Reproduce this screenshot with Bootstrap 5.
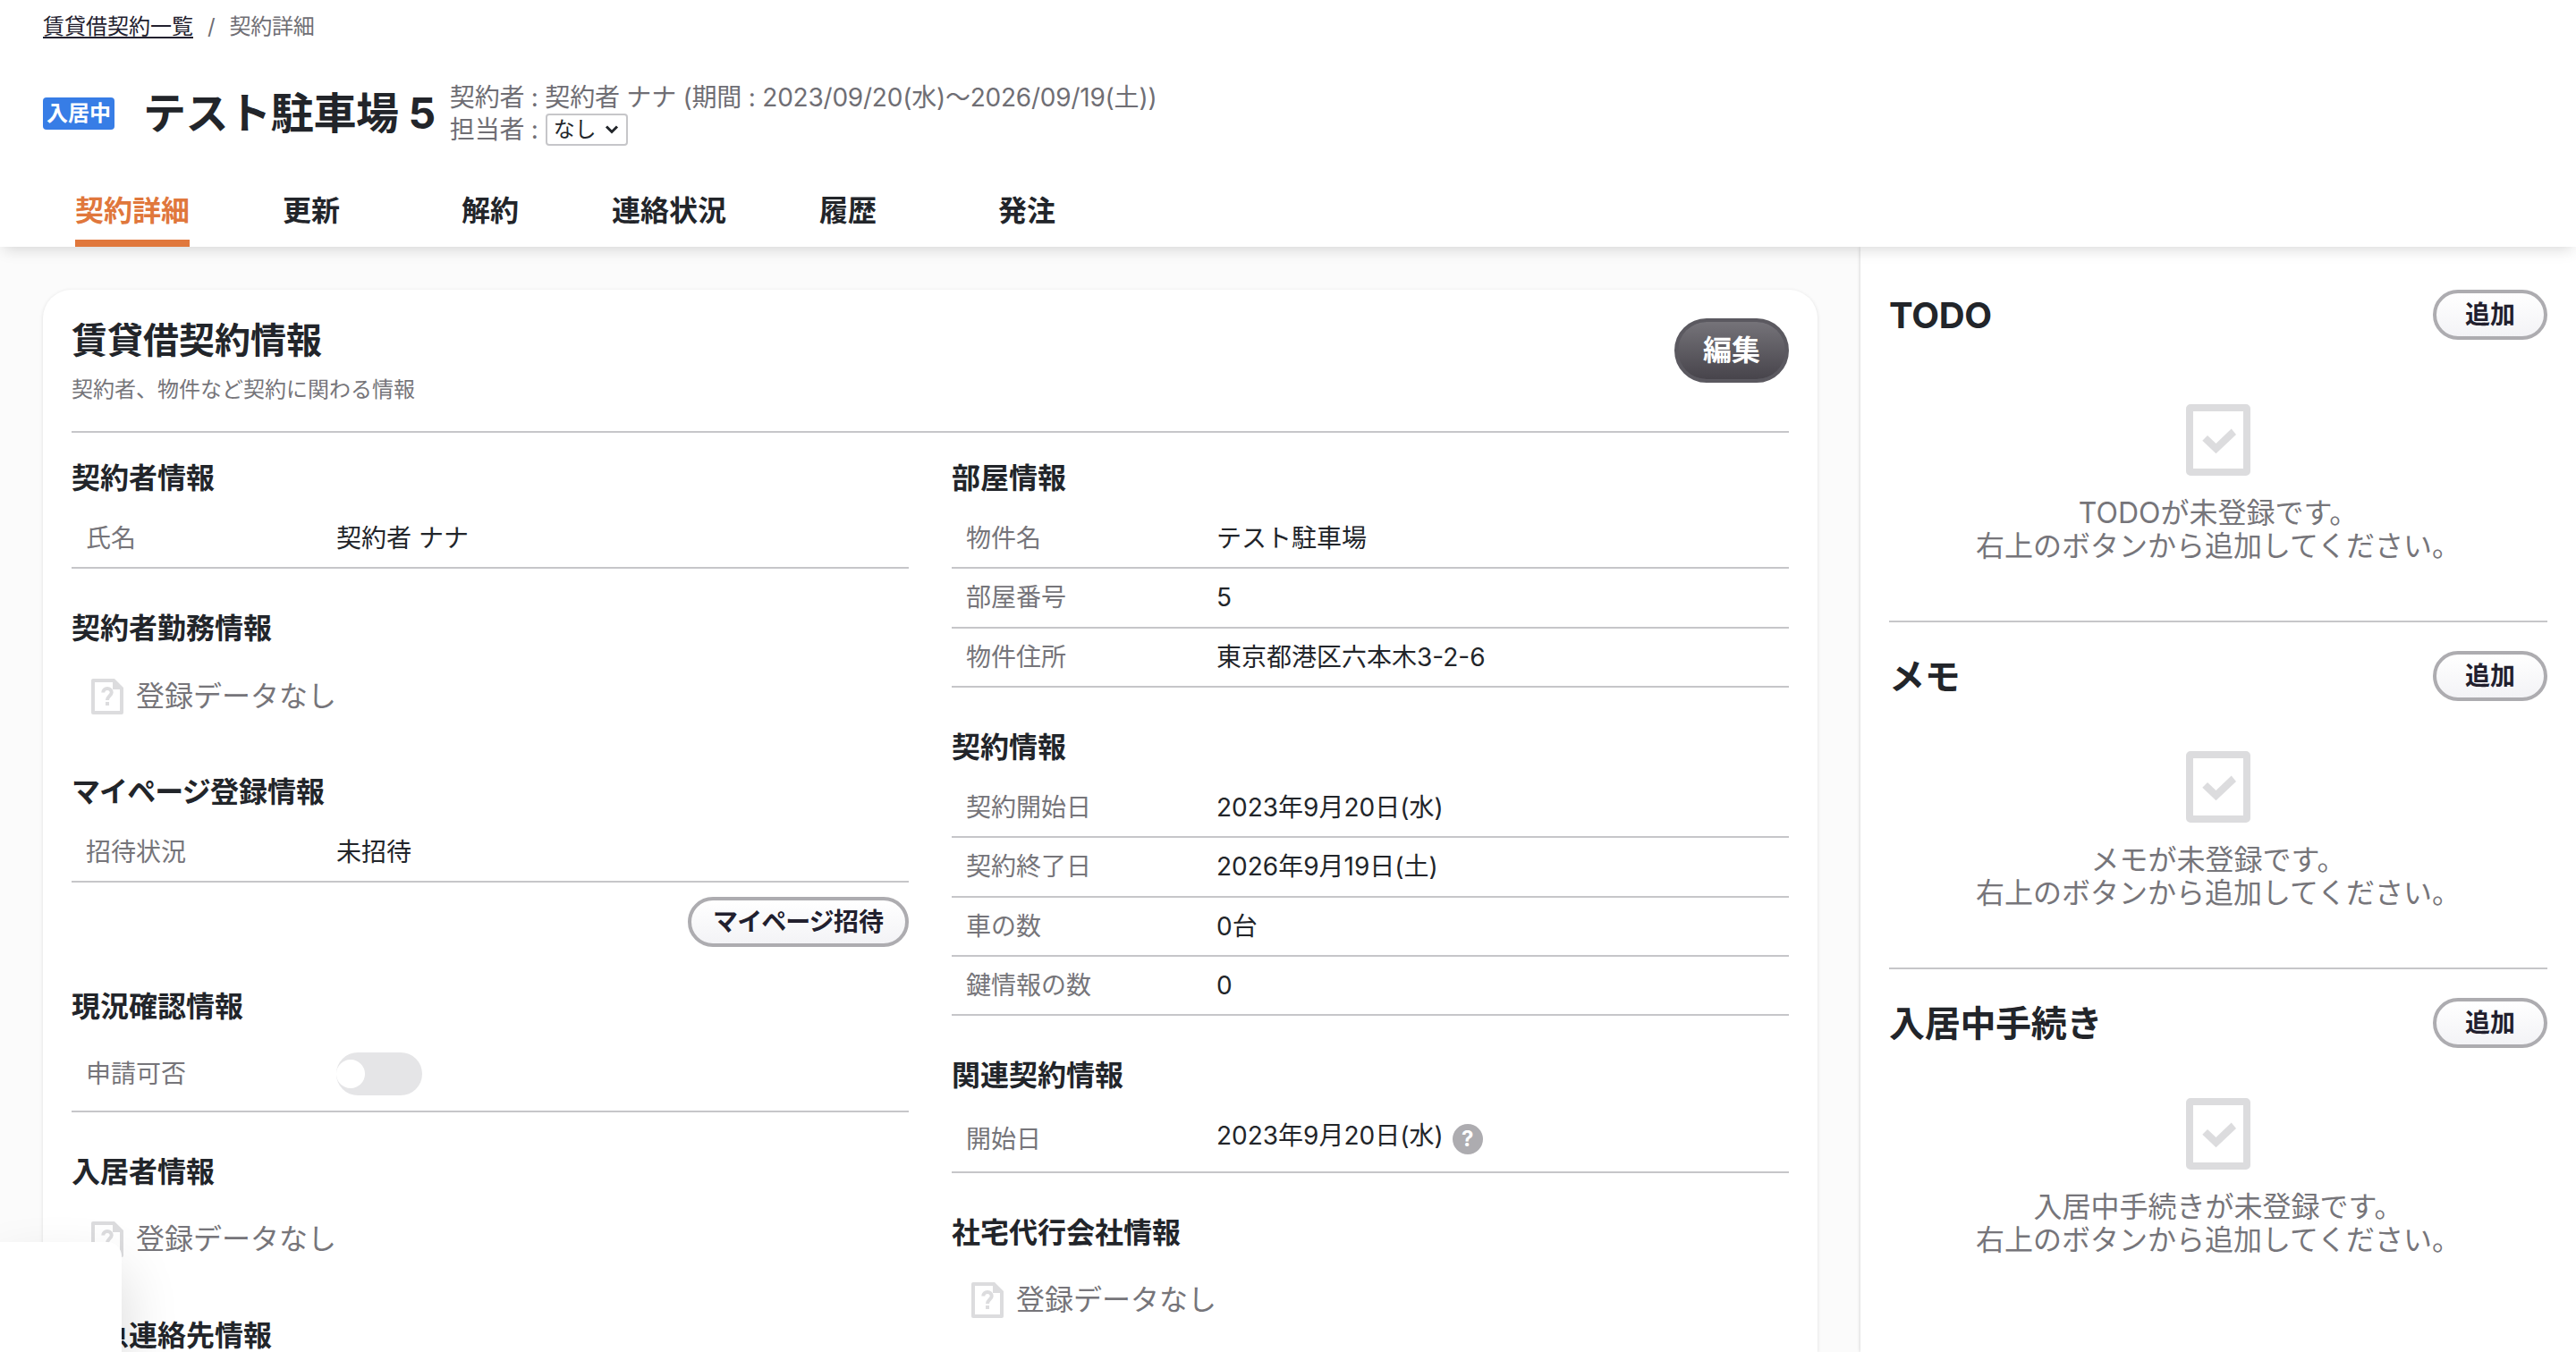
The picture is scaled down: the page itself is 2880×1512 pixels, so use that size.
<!DOCTYPE html>
<html lang="ja">
<head>
  <meta charset="UTF-8">
  <meta name="viewport" content="width=device-width, initial-scale=1.0">
  <title>契約詳細</title>
  <link href="https://cdn.jsdelivr.net/npm/bootstrap@5.3.0/dist/css/bootstrap.min.css" rel="stylesheet">
  <style>
    body {
      font-family: Inter, "Noto Sans CJK JP", sans-serif;
      font-size: 28px;
      line-height: 1.3;
      color: #22252a;
      background: #fbfbfb;
      height: 1512px;
      overflow: hidden;
    }
    .page-head { height: 276px; box-shadow: 0 6px 16px -4px rgba(0, 0, 0, .17); z-index: 2; }
    .crumbs { font-size: 24px; height: 58px; padding: 1px 48px 0; color: #6f6e74; }
    .crumbs a { color: #22202e; text-underline-offset: 3px; text-decoration-thickness: 2px; }
    .crumbs span { letter-spacing: -.2px; }
    .head-title { height: 137px; padding-left: 48px; }
    .state-tag { background: #377de6; color: #fff; font-size: 24px; font-weight: 700; width: 80px; height: 36px; border-radius: 4px; margin-top: 1px; }
    .head-title h1 { font-size: 48px; font-weight: 700; margin: 1px 16px 0 32px; letter-spacing: -.4px; }
    .head-info { color: #6f6e74; line-height: 36px; letter-spacing: -.22px; }
    .staff-select { width: 92px; height: 36px; border: 2px solid #c6c6c9; border-radius: 4px; padding: 0 8px 0 7px; font-size: 24px; color: #22252a; }
    .tabs { height: 81px; padding-left: 48px; font-size: 32px; font-weight: 700; }
    .tabs li { width: 200px; }
    .tabs a { display: block; height: 81px; padding-top: 20px; color: #22252a; text-decoration: none; }
    .tabs a.active { color: #e0773c; border-bottom: 8px solid #e0773c; }

    .main-col { width: 2080px; height: 1236px; padding: 48px 48px 0; }
    .panel { width: 1984px; height: 1188px; background: #fff; border-radius: 32px 32px 0 0; padding: 32px; box-shadow: 0 1px 4px rgba(0, 0, 0, .12); overflow: hidden; }
    .panel-head { height: 128px; border-bottom: 2px solid #c6c6c9; }
    .panel-head h2 { font-size: 40px; font-weight: 700; margin: -1px 0 13px; line-height: 52px; }
    .panel-head p { font-size: 24px; color: #76757a; margin: 0; }
    .info-cols { gap: 48px; padding-top: 30.4px; }
    .info-cols > div { width: 936px; }
    .block { margin-bottom: 46px; }
    .block h3 { font-size: 32px; font-weight: 700; line-height: 41.6px; margin: 0 0 14px; }
    .item { min-height: 66.4px; border-bottom: 2px solid #c6c6c9; padding-left: 16px; }
    .item dt { width: 280px; font-weight: 400; color: #76757a; }
    .item dd { margin: 0; }
    .item-switch { height: 83px; }
    .item-help { height: 74px; }
    .item-help dd { margin-top: -5px; }
    .no-data { height: 81.2px; padding-left: 22px; gap: 14px; font-size: 32px; color: #76757a; }
    .toggle { width: 96px; height: 48px; border-radius: 24px; background: #e5e5e7; }
    .toggle span { width: 32px; height: 32px; border-radius: 50%; background: #fff; }
    .help { width: 34px; height: 34px; background: #adacb0; color: #fff; font-size: 24px; font-weight: 700; line-height: 34px; margin: 5px 0 0 10px; }
    .kana { letter-spacing: -.9px; }

    .pill { height: 56px; border: 4px solid #adacb0; border-radius: 28px; padding: 0 24px; background: linear-gradient(#fff, #f3f3f6); color: #22202e; font-size: 28px; font-weight: 700; line-height: 46px; }
    .pill-add { width: 128px; }
    .pill-dark { width: 128px; height: 72px; border-color: #5b5960; border-radius: 36px; background: linear-gradient(#757379, #47444b) padding-box, #5b5960; color: #fff; font-size: 32px; line-height: 60px; padding: 0; }

    .side { width: 800px; height: 1236px; background: #fff; padding: 16px 32px 0; box-shadow: 0 0 4px rgba(0, 0, 0, .2); }
    .side-block { height: 388px; padding-top: 32px; border-bottom: 2px solid #c6c6c9; }
    .side-block:first-child { height: 404px; }
    .side-block:first-child .empty { padding-top: 72px; }
    .side-block:last-child { border: 0; }
    .side-block h2 { font-size: 40px; font-weight: 700; margin: 1px 0 0; letter-spacing: -.3px; }
    .empty { padding-top: 56px; font-size: 32px; line-height: 37px; color: #76757a; }
    .empty svg { display: block; margin: 0 auto 23px; }

    .corner-box { left: 0; bottom: 0; width: 136px; height: 123px; background: #fff; border-radius: 0 16px 0 0; box-shadow: 0 32px 64px rgba(0, 0, 0, .16); z-index: 3; }
  </style>
</head>
<body>
  <!-- icons -->
  <svg class="d-none">
    <symbol id="icon-file" viewBox="0 0 36 40">
      <path fill="#dcdcde" fill-rule="evenodd" d="M2 0H26L36 10V38a2 2 0 0 1-2 2H2a2 2 0 0 1-2-2V2a2 2 0 0 1 2-2ZM4 4V36H32V12H24V4Z"/>
      <path d="M13.300 15.500A4.700 4.500 0 0 1 22.700 15.500C22.700 19 18 19.500 18 24" fill="none" stroke="#dcdcde" stroke-width="4"/>
      <path fill="#dcdcde" d="M16 26h4v4h-4z"/>
    </symbol>
    <symbol id="icon-check" viewBox="0 0 72 80">
      <rect x="4" y="4" width="64" height="72" rx="1" fill="none" stroke="#dcdcde" stroke-width="8"/>
      <path fill="#dcdcde" d="M24 35L33.500 44L50.700 27.500L56 34L33.500 55.300L18.300 40.700Z"/>
    </symbol>
  </svg>

  <header class="page-head bg-white position-relative">
    <nav class="crumbs d-flex align-items-center">
      <a href="#">賃貸借契約一覧</a><span class="px-3">/</span><span>契約詳細</span>
    </nav>
    <div class="head-title d-flex align-items-center">
      <span class="state-tag d-flex align-items-center justify-content-center">入居中</span>
      <h1>テスト駐車場 5</h1>
      <div class="head-info">
        <div>契約者 : 契約者 ナナ (期間 : 2023/09/20(水)〜2026/09/19(土))</div>
        <div class="d-flex align-items-center">
          <span>担当者 :</span>
          <span class="staff-select d-flex align-items-center justify-content-between ms-2">なし
            <svg width="16" height="10" viewBox="0 0 16 10"><path d="M2 1.500L8 7.500L14 1.500" fill="none" stroke="#22252a" stroke-width="3"/></svg>
          </span>
        </div>
      </div>
    </div>
    <ul class="tabs list-unstyled d-flex mb-0">
      <li class="d-flex justify-content-center"><a class="active" href="#">契約詳細</a></li>
      <li class="d-flex justify-content-center"><a href="#">更新</a></li>
      <li class="d-flex justify-content-center"><a href="#">解約</a></li>
      <li class="d-flex justify-content-center"><a href="#">連絡状況</a></li>
      <li class="d-flex justify-content-center"><a href="#">履歴</a></li>
      <li class="d-flex justify-content-center"><a href="#">発注</a></li>
    </ul>
  </header>

  <div class="d-flex">
    <main class="main-col">
      <div class="panel">
        <div class="panel-head d-flex justify-content-between">
          <div>
            <h2>賃貸借契約情報</h2>
            <p>契約者、物件など契約に関わる情報</p>
          </div>
          <button type="button" class="pill pill-dark">編集</button>
        </div>
        <div class="info-cols d-flex">
          <div>
            <section class="block">
              <h3>契約者情報</h3>
              <dl class="mb-0">
                <div class="item d-flex align-items-center"><dt>氏名</dt><dd>契約者 ナナ</dd></div>
              </dl>
            </section>
            <section class="block">
              <h3>契約者勤務情報</h3>
              <div class="no-data d-flex align-items-center"><svg width="36" height="40"><use href="#icon-file"/></svg>登録データなし</div>
            </section>
            <section class="block">
              <h3><span class="kana">マイページ</span>登録情報</h3>
              <dl class="mb-3">
                <div class="item d-flex align-items-center"><dt>招待状況</dt><dd>未招待</dd></div>
              </dl>
              <div class="d-flex justify-content-end"><button type="button" class="pill"><span class="kana">マイページ</span>招待</button></div>
            </section>
            <section class="block">
              <h3>現況確認情報</h3>
              <dl class="mb-0">
                <div class="item item-switch d-flex align-items-center"><dt>申請可否</dt><dd class="toggle d-flex align-items-center"><span></span></dd></div>
              </dl>
            </section>
            <section class="block">
              <h3>入居者情報</h3>
              <div class="no-data d-flex align-items-center"><svg width="36" height="40"><use href="#icon-file"/></svg>登録データなし</div>
            </section>
            <section class="block mb-0">
              <h3 class="mb-0">緊急連絡先情報</h3>
            </section>
          </div>
          <div>
            <section class="block">
              <h3>部屋情報</h3>
              <dl class="mb-0">
                <div class="item d-flex align-items-center"><dt>物件名</dt><dd>テスト駐車場</dd></div>
                <div class="item d-flex align-items-center"><dt>部屋番号</dt><dd>5</dd></div>
                <div class="item d-flex align-items-center"><dt>物件住所</dt><dd>東京都港区六本木3-2-6</dd></div>
              </dl>
            </section>
            <section class="block">
              <h3>契約情報</h3>
              <dl class="mb-0">
                <div class="item d-flex align-items-center"><dt>契約開始日</dt><dd>2023年9月20日(水)</dd></div>
                <div class="item d-flex align-items-center"><dt>契約終了日</dt><dd>2026年9月19日(土)</dd></div>
                <div class="item d-flex align-items-center"><dt>車の数</dt><dd>0台</dd></div>
                <div class="item d-flex align-items-center"><dt>鍵情報の数</dt><dd>0</dd></div>
              </dl>
            </section>
            <section class="block">
              <h3>関連契約情報</h3>
              <dl class="mb-0">
                <div class="item item-help d-flex align-items-center"><dt>開始日</dt><dd class="d-flex"><span>2023年9月20日(水)</span><span class="help rounded-circle text-center">?</span></dd></div>
              </dl>
            </section>
            <section class="block mb-0">
              <h3>社宅代行会社情報</h3>
              <div class="no-data d-flex align-items-center"><svg width="36" height="40"><use href="#icon-file"/></svg>登録データなし</div>
            </section>
          </div>
        </div>
      </div>
    </main>

    <aside class="side">
      <section class="side-block">
        <div class="d-flex justify-content-between align-items-center"><h2>TODO</h2><button type="button" class="pill pill-add">追加</button></div>
        <div class="empty text-center"><svg width="72" height="80"><use href="#icon-check"/></svg>TODOが未登録です。<br>右上のボタンから追加してください。</div>
      </section>
      <section class="side-block">
        <div class="d-flex justify-content-between align-items-center"><h2>メモ</h2><button type="button" class="pill pill-add">追加</button></div>
        <div class="empty text-center"><svg width="72" height="80"><use href="#icon-check"/></svg>メモが未登録です。<br>右上のボタンから追加してください。</div>
      </section>
      <section class="side-block">
        <div class="d-flex justify-content-between align-items-center"><h2>入居中手続き</h2><button type="button" class="pill pill-add">追加</button></div>
        <div class="empty text-center"><svg width="72" height="80"><use href="#icon-check"/></svg>入居中手続きが未登録です。<br>右上のボタンから追加してください。</div>
      </section>
    </aside>
  </div>

  <div class="corner-box position-fixed"></div>

  <script src="https://cdn.jsdelivr.net/npm/bootstrap@5.3.0/dist/js/bootstrap.bundle.min.js"></script>
</body>
</html>
